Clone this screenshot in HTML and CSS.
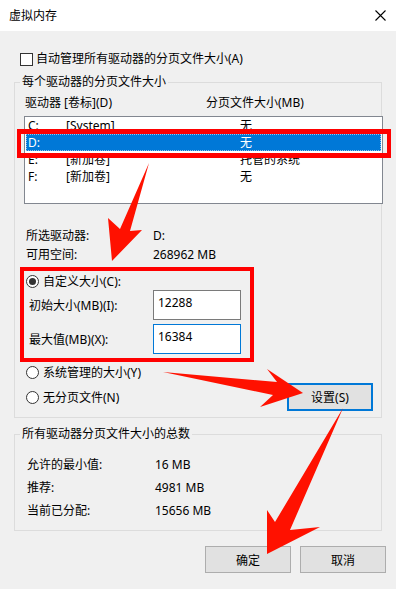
FILE: index.html
```html
<!DOCTYPE html>
<html lang="zh-CN">
<head>
    <meta charset="UTF-8">
    <meta name="viewport" content="width=device-width, initial-scale=1.0">
    <title>虚拟内存</title>
    <link rel="stylesheet" href="styles.css">
</head>
<body>
    <div class="window">
        <div class="titlebar">
            <span>虚拟内存</span>
            <svg class="close" width="11" height="11" viewBox="0 0 11 11">
                <path d="M0.5 0.5 L10.5 10.5 M10.5 0.5 L0.5 10.5" stroke="#000" stroke-width="1.1" fill="none"/>
            </svg>
        </div>

        <div class="dialog">
            <label class="check-row"><span class="checkbox"></span>自动管理所有驱动器的分页文件大小(A)</label>

            <fieldset class="group drives">
                <legend>每个驱动器的分页文件大小</legend>
                <div class="list-head">
                    <span class="col-drive">驱动器 [卷标](D)</span>
                    <span>分页文件大小(MB)</span>
                </div>
                <div class="listbox">
                    <div class="list-row"><span class="c1">C:</span><span class="c2">[System]</span><span>无</span></div>
                    <div class="list-row selected"><span class="c1">D:</span><span class="c2"></span><span>无</span></div>
                    <div class="list-row"><span class="c1">E:</span><span class="c2">[新加卷]</span><span>托管的系统</span></div>
                    <div class="list-row"><span class="c1">F:</span><span class="c2">[新加卷]</span><span>无</span></div>
                </div>

                <div class="info-row first"><span class="info-label">所选驱动器:</span><span>D:</span></div>
                <div class="info-row"><span class="info-label">可用空间:</span><span>268962 MB</span></div>

                <div class="radio-row custom"><span class="radio checked"></span>自定义大小(C):</div>
                <div class="field-row">
                    <label for="initial">初始大小(MB)(I):</label>
                    <input class="text-input" id="initial" type="text" value="12288">
                </div>
                <div class="field-row second">
                    <label for="maximum">最大值(MB)(X):</label>
                    <input class="text-input focused" id="maximum" type="text" value="16384">
                </div>
                <div class="radio-row system"><span class="radio"></span>系统管理的大小(Y)</div>
                <div class="radio-row nofile">
                    <span class="radio"></span>无分页文件(N)
                    <button class="btn btn-default">设置(S)</button>
                </div>
            </fieldset>

            <fieldset class="group totals">
                <legend>所有驱动器分页文件大小的总数</legend>
                <div class="total-row first"><span class="total-label">允许的最小值:</span><span>16 MB</span></div>
                <div class="total-row"><span class="total-label">推荐:</span><span>4981 MB</span></div>
                <div class="total-row"><span class="total-label">当前已分配:</span><span>15656 MB</span></div>
            </fieldset>

            <div class="actions">
                <button class="btn">确定</button>
                <button class="btn">取消</button>
            </div>
        </div>

        <!-- annotations drawn over the dialog -->
        <div class="mark mark-row"></div>
        <div class="mark mark-custom"></div>
        <svg class="arrows" width="396" height="589" viewBox="0 0 396 589">
            <polygon points="149,163 130,231 142,230 112,261 108,218 120,229" fill="#ff1100"/>
            <polygon points="163,372 277,382 267,369 303,393 260,407 273,395" fill="#ff1100"/>
            <polygon points="343,408 290,530 320,527 267,554 267,510 275,522" fill="#ff1100"/>
        </svg>
    </div>
</body>
</html>
```

FILE: styles.css
```css
* {
    box-sizing: border-box;
}
body {
    margin: 0;
    font-family: "Noto Sans", "Noto Sans CJK SC", sans-serif;
    font-size: 12px;
    color: #000;
    background-color: #f0f0f0;
}
.window {
    position: relative;
    width: 396px;
    height: 589px;
    background-color: #f0f0f0;
    overflow: hidden;
}
.titlebar {
    height: 31px;
    background-color: #fff;
    display: flex;
    align-items: center;
    justify-content: space-between;
    padding: 0 10px 0 9px;
    line-height: 16px;
}
.dialog {
    padding: 0 14px;
}
.check-row {
    display: flex;
    align-items: center;
    height: 16px;
    line-height: 16px;
    margin-top: 20px;
    padding-left: 6px;
}
.checkbox {
    width: 13px;
    height: 13px;
    border: 1px solid #333;
    background-color: #fff;
    margin-right: 3px;
}
.group {
    border: 1px solid #dcdcdc;
    margin: 0;
    padding: 0;
    min-width: 0;
}
.group legend {
    margin-left: 5px;
    padding: 0 2px;
    line-height: 16px;
}
.drives {
    margin-top: 7px;
    padding-bottom: 6px;
}
.list-head {
    display: flex;
    height: 18px;
    line-height: 18px;
    margin-top: 4px;
    padding-left: 10px;
}
.col-drive {
    width: 181px;
}
.listbox {
    height: 88px;
    margin: 4px -2px 0 9px;
    border: 1px solid #828790;
    background-color: #fff;
    padding: 0 1px;
}
.list-row {
    display: flex;
    height: 17px;
    line-height: 17px;
    padding-left: 2px;
}
.list-row .c1 {
    width: 38px;
}
.list-row .c2 {
    width: 174px;
}
.list-row.selected {
    background-color: #0078d7;
    color: #fff;
    outline: 1px dotted #8fc3ee;
    outline-offset: -1px;
}
.info-row {
    display: flex;
    height: 19px;
    line-height: 19px;
    padding-left: 11px;
}
.info-row.first {
    margin-top: 22px;
}
.info-label {
    width: 127px;
}
.radio-row {
    display: flex;
    align-items: center;
    height: 18px;
    padding-left: 11px;
}
.radio-row.custom {
    margin-top: 8px;
}
.radio-row.system {
    margin-top: 9px;
}
.radio-row.nofile {
    height: 28px;
    margin-top: 2px;
    padding-right: 8px;
}
.radio {
    width: 13px;
    height: 13px;
    border: 1px solid #333;
    border-radius: 50%;
    background-color: #fff;
    margin-right: 4px;
    display: flex;
    align-items: center;
    justify-content: center;
}
.radio.checked::after {
    content: "";
    width: 7px;
    height: 7px;
    border-radius: 50%;
    background-color: #333;
}
.field-row {
    display: flex;
    align-items: center;
    height: 30px;
    padding-left: 14px;
}
.field-row.second {
    margin-top: 4px;
}
.field-row label {
    width: 124px;
}
.text-input {
    width: 88px;
    height: 30px;
    border: 1px solid #7a7a7a;
    padding: 2px 4px 8px;
    font: inherit;
    line-height: 18px;
    background-color: #fff;
    color: #000;
    outline: none;
}
.text-input.focused {
    border-color: #0078d7;
}
.btn {
    width: 86px;
    height: 27px;
    border: 1px solid #adadad;
    background-color: #e1e1e1;
    font: inherit;
    color: #000;
    padding: 0;
}
.btn-default {
    height: 28px;
    margin-left: auto;
    border: 2px solid #0078d7;
}
.totals {
    margin-top: 8px;
    padding-bottom: 8px;
}
.total-row {
    display: flex;
    height: 23px;
    line-height: 23px;
    padding-left: 12px;
}
.total-row.first {
    margin-top: 11px;
}
.total-label {
    width: 128px;
}
.actions {
    display: flex;
    justify-content: flex-end;
    gap: 9px;
    margin: 15px -4px 0 0;
}
.mark {
    position: absolute;
    border: 4px solid #ff0000;
}
.mark-row {
    left: 17px;
    top: 129px;
    width: 374px;
    height: 29px;
    border-width: 5px 4px;
}
.mark-custom {
    left: 20px;
    top: 267px;
    width: 234px;
    height: 95px;
}
.arrows {
    position: absolute;
    left: 0;
    top: 0;
    pointer-events: none;
}
```
